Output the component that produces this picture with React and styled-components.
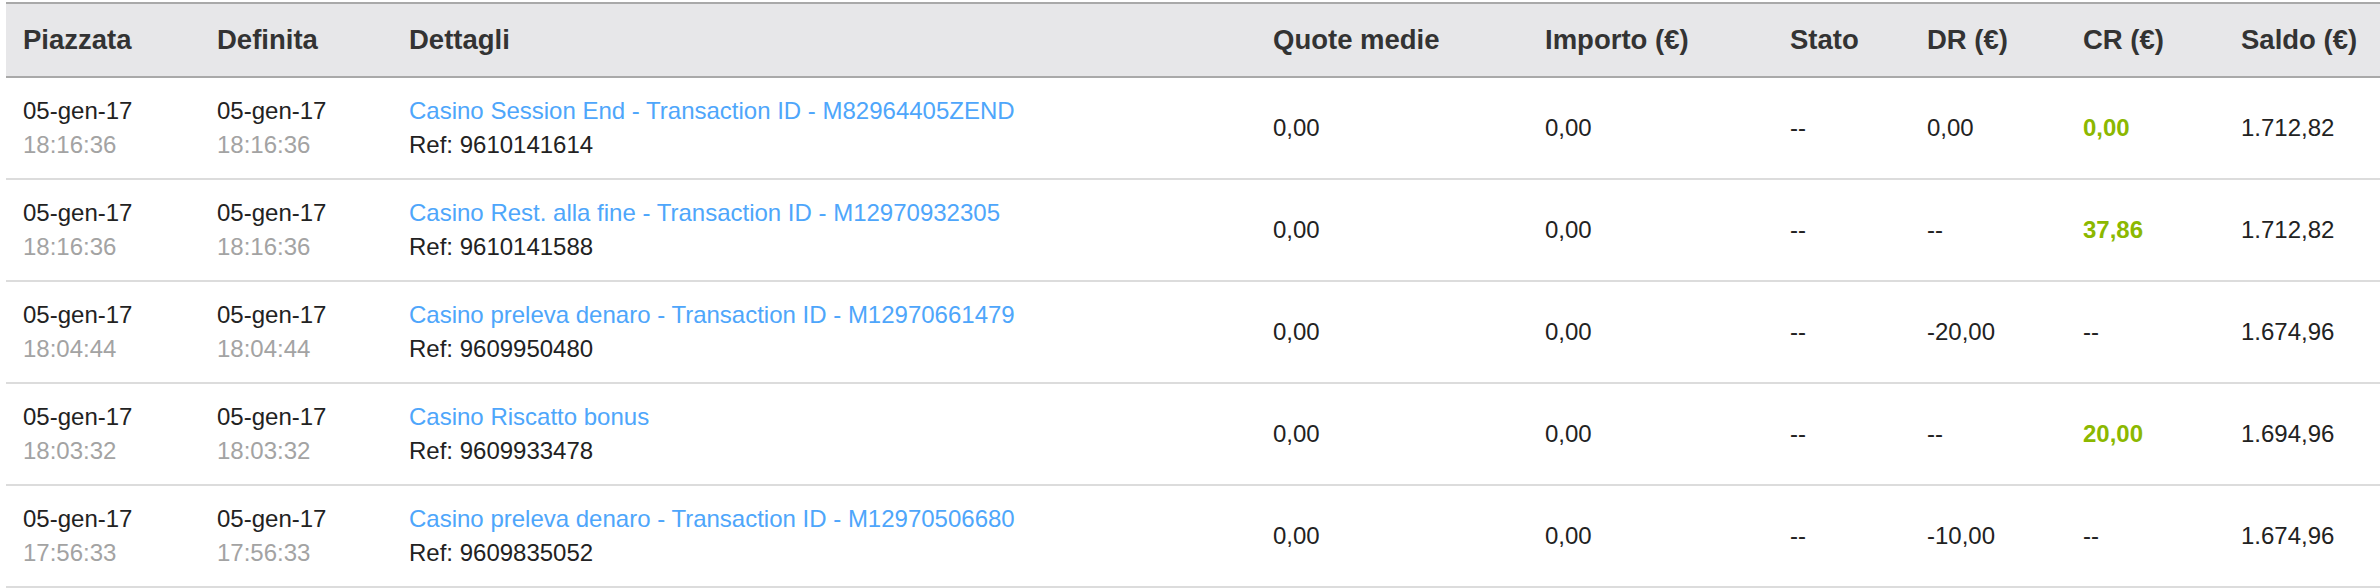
import React from "react";
import styled, { createGlobalStyle } from "styled-components";

const GlobalStyle = createGlobalStyle`
  html, body {
    margin: 0;
    padding: 0;
    background: #fff;
  }
  body {
    font-family: "Liberation Sans", Arial, Helvetica, sans-serif;
    color: #222;
  }
`;

const columns = [
  { key: "placed", label: "Piazzata", width: 194 },
  { key: "settled", label: "Definita", width: 192 },
  { key: "details", label: "Dettagli", width: 864 },
  { key: "odds", label: "Quote medie", width: 272 },
  { key: "amount", label: "Importo (€)", width: 245 },
  { key: "state", label: "Stato", width: 137 },
  { key: "dr", label: "DR (€)", width: 156 },
  { key: "cr", label: "CR (€)", width: 158 },
  { key: "balance", label: "Saldo (€)", width: 156 },
];

const rows = [
  {
    date: "05-gen-17",
    time: "18:16:36",
    title: "Casino Session End - Transaction ID - M82964405ZEND",
    ref: "9610141614",
    dr: "0,00",
    cr: "0,00",
    balance: "1.712,82",
  },
  {
    date: "05-gen-17",
    time: "18:16:36",
    title: "Casino Rest. alla fine - Transaction ID - M12970932305",
    ref: "9610141588",
    dr: "--",
    cr: "37,86",
    balance: "1.712,82",
  },
  {
    date: "05-gen-17",
    time: "18:04:44",
    title: "Casino preleva denaro - Transaction ID - M12970661479",
    ref: "9609950480",
    dr: "-20,00",
    cr: "--",
    balance: "1.674,96",
  },
  {
    date: "05-gen-17",
    time: "18:03:32",
    title: "Casino Riscatto bonus",
    ref: "9609933478",
    dr: "--",
    cr: "20,00",
    balance: "1.694,96",
  },
  {
    date: "05-gen-17",
    time: "17:56:33",
    title: "Casino preleva denaro - Transaction ID - M12970506680",
    ref: "9609835052",
    dr: "-10,00",
    cr: "--",
    balance: "1.674,96",
  },
];

function DateCell({ date, time }) {
  return (
    <Cell>
      <Line>{date}</Line>
      <Time>{time}</Time>
    </Cell>
  );
}

export default function App() {
  return (
    <>
      <GlobalStyle />
      <Wrapper>
        <Table>
          <colgroup>
            {columns.map((col) => (
              <col key={col.key} style={{ width: col.width }} />
            ))}
          </colgroup>
          <thead>
            <HeadRow>
              {columns.map((col) => (
                <HeadCell key={col.key}>{col.label}</HeadCell>
              ))}
            </HeadRow>
          </thead>
          <tbody>
            {rows.map((row, index) => (
              <Row key={index}>
                <DateCell date={row.date} time={row.time} />
                <DateCell date={row.date} time={row.time} />
                <Cell>
                  <Link href="#">{row.title}</Link>
                  <Line>Ref: {row.ref}</Line>
                </Cell>
                <Cell>0,00</Cell>
                <Cell>0,00</Cell>
                <Cell>--</Cell>
                <Cell>{row.dr}</Cell>
                <Cell credit={row.cr !== "--"}>{row.cr}</Cell>
                <Cell>{row.balance}</Cell>
              </Row>
            ))}
          </tbody>
        </Table>
      </Wrapper>
    </>
  );
}

const Wrapper = styled.div`
  padding: 2px 0 0 6px;
`;

const Table = styled.table`
  width: 2374px;
  table-layout: fixed;
  border-collapse: collapse;
  border-spacing: 0;
`;

const HeadRow = styled.tr`
  background-color: #e7e7e9;
  border-top: 2px solid #a9a9a9;
  border-bottom: 2px solid #a9a9a9;
`;

const HeadCell = styled.th`
  height: 72px;
  padding: 0 0 0 17px;
  text-align: left;
  vertical-align: middle;
  font-size: 27.5px;
  font-weight: 700;
  color: #333;
  white-space: nowrap;
`;

const Row = styled.tr`
  border-bottom: 2px solid #dcdcdc;
`;

const Cell = styled.td`
  height: 100px;
  padding: 0 0 0 17px;
  vertical-align: middle;
  font-size: 24px;
  line-height: 34px;
  white-space: nowrap;
  color: ${(props) => (props.credit ? "#8cb800" : "#222")};
  font-weight: ${(props) => (props.credit ? 700 : 400)};
`;

const Line = styled.div`
  color: #222;
`;

const Time = styled.div`
  color: #a3a3a3;
`;

const Link = styled.a`
  display: block;
  color: #4ea6fb;
  text-decoration: none;
`;
